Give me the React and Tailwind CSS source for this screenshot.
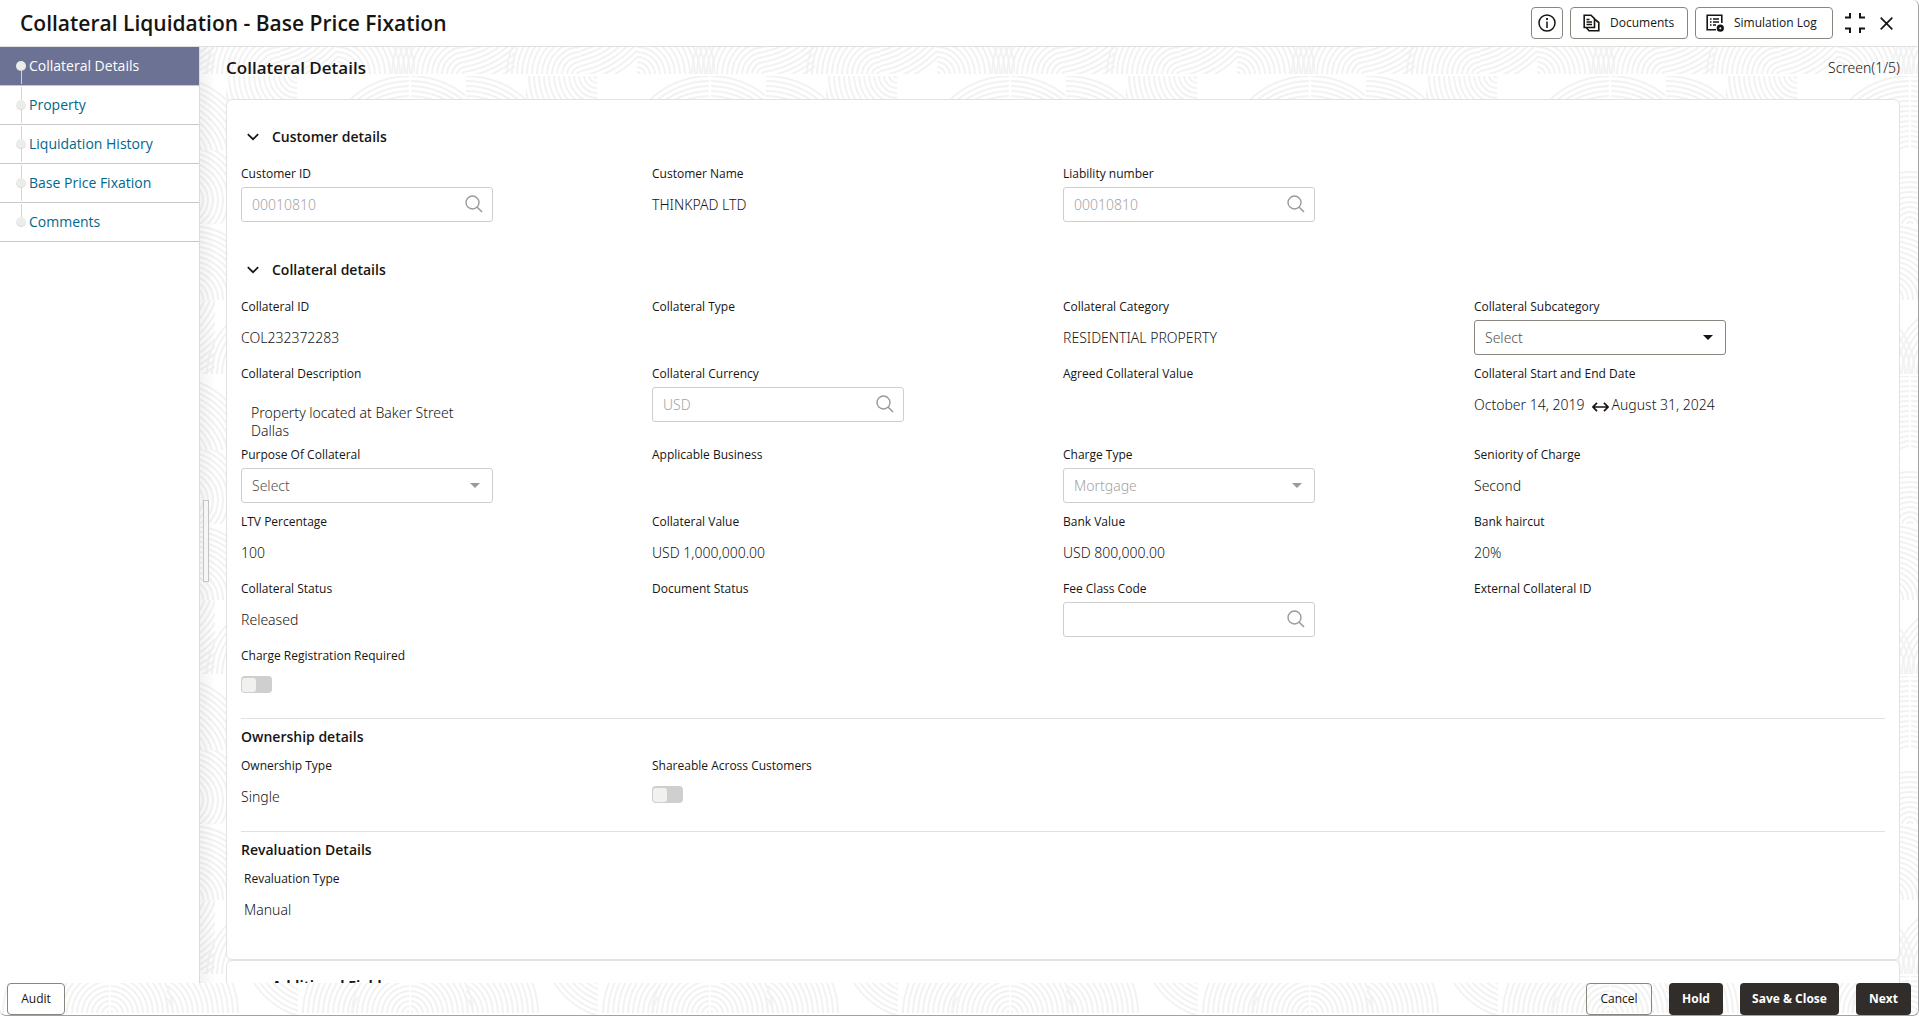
import React, { useId } from "react";

const RADII = Array.from({ length: 30 }, (_, i) => 3 + i * 5);

function Rings({ x, y, w, h, cx, cy, max }) {
  return (
    <svg x={x} y={y} width={w} height={h} viewBox={`${x} ${y} ${w} ${h}`}>
      {RADII.filter((r) => r <= max).map((r) => (
        <circle key={r} cx={cx} cy={cy} r={r} fill="none" stroke="#f3f2f2" strokeWidth="2" />
      ))}
    </svg>
  );
}

function Texture({ left, top }) {
  const id = useId();
  return (
    <svg aria-hidden="true" className="pointer-events-none absolute inset-0 h-full w-full">
      <defs>
        <pattern id={id} width="300" height="300" patternUnits="userSpaceOnUse" patternTransform={`translate(${left} ${top})`}>
          <Rings x={37} y={0} w={78} h={74} cx={37} cy={75} max={78} />
          <Rings x={90} y={0} w={75} h={74} cx={165} cy={75} max={75} />
          <Rings x={165} y={0} w={50} h={74} cx={150} cy={-20} max={110} />
          <Rings x={205} y={0} w={75} h={74} cx={280} cy={75} max={75} />
          <Rings x={280} y={0} w={20} h={74} cx={262} cy={-20} max={110} />
          <Rings x={0} y={0} w={37} h={74} cx={-38} cy={-20} max={110} />
          <Rings x={0} y={76} w={109} h={74} cx={110} cy={164} max={90} />
          <Rings x={111} y={76} w={54} h={74} cx={110} cy={164} max={90} />
          <Rings x={166} y={76} w={62} h={74} cx={166} cy={164} max={90} />
          <Rings x={226} y={76} w={71} h={74} cx={297} cy={75} max={73} />
          <Rings x={200} y={150} w={100} h={74} cx={185} cy={200} max={62} />
          <Rings x={60} y={150} w={100} h={74} cx={110} cy={225} max={55} />
          <Rings x={0} y={150} w={60} h={74} cx={0} cy={150} max={74} />
          <Rings x={190} y={226} w={110} h={74} cx={190} cy={299} max={73} />
          <Rings x={0} y={226} w={90} h={74} cx={110} cy={225} max={90} />
          <Rings x={90} y={226} w={90} h={74} cx={90} cy={299} max={73} />
        </pattern>
      </defs>
      <rect width="100%" height="100%" fill={`url(#${id})`} />
    </svg>
  );
}

function FooterTexture() {
  const id = useId();
  return (
    <svg aria-hidden="true" className="pointer-events-none absolute inset-0 h-full w-full">
      <defs>
        <pattern id={id} width="300" height="32" patternUnits="userSpaceOnUse">
          <Rings x={2} y={0} w={107} h={30} cx={110} cy={31} max={58} />
          <Rings x={111} y={0} w={64} h={30} cx={110} cy={31} max={63} />
          <Rings x={2} y={0} w={56} h={30} cx={86} cy={31} max={84} />
          <Rings x={166} y={0} w={74} h={30} cx={150} cy={31} max={90} />
          <Rings x={240} y={0} w={58} h={32} cx={320} cy={-42} max={78} />
        </pattern>
      </defs>
      <rect width="100%" height="100%" fill={`url(#${id})`} />
    </svg>
  );
}

const STEPS = ["Collateral Details", "Property", "Liquidation History", "Base Price Fixation", "Comments"];

function Steps() {
  return (
    <nav aria-label="Steps" className="w-[200px] shrink-0 border-r border-[#d5dde0] bg-white">
      <ul>
        {STEPS.map((s, i) => (
          <li key={s} className="border-b border-[#c8c7c6]">
            <a
              href="#"
              aria-current={i === 0 ? "step" : undefined}
              className={
                "flex h-[38px] items-center pl-4 text-sm " +
                (i === 0 ? "bg-[#6b7294] text-white" : "text-[#00688c]")
              }
            >
              <span className="mr-[3px] flex h-full w-[10px] flex-col items-center py-px">
                <span className={"w-px flex-1 " + (i === 0 ? "" : "bg-[#d4d3d2]")} />
                <span className="size-[10px] rounded-full border-b border-[#d8d7d6] bg-[#ececeb]" />
                <span className={"w-px flex-1 " + (i === STEPS.length - 1 ? "" : "bg-[#d4d3d2]")} />
              </span>
              {s}
            </a>
          </li>
        ))}
      </ul>
    </nav>
  );
}

const LABEL = "block h-4 text-xs leading-4 whitespace-nowrap text-[#161513]";
const VALUE = "font-['Noto_Sans',sans-serif] text-sm font-light";
const BOX = VALUE + " h-[35px] w-full rounded-[3px] border bg-white pl-[10px]";

function Cell({ label, children }) {
  return (
    <div className="pb-[11px]">
      <div className={LABEL}>{label}</div>
      <div className={VALUE + " mt-[5px] flex h-[35px] items-center whitespace-nowrap text-[#161513]"}>{children}</div>
    </div>
  );
}

function SearchCell({ label, value }) {
  const id = useId();
  return (
    <div className="pb-[11px]">
      <label htmlFor={id} className={LABEL}>{label}</label>
      <div className="relative mt-[5px] w-[252px]">
        <input id={id} disabled defaultValue={value} className={BOX + " border-[#cfcecd] pr-10 text-[#a5a4a3]"} />
        <svg aria-hidden="true" viewBox="0 0 18 18" className="absolute top-2 right-[10px] size-[18px]" fill="none" stroke="#9c9a98" strokeWidth="1.4">
          <circle cx="7.5" cy="7.5" r="6.5" />
          <path d="M12 12l5 5" strokeWidth="1.6" />
        </svg>
      </div>
    </div>
  );
}

function SelectCell({ label, value, disabled, muted }) {
  const id = useId();
  return (
    <div className="pb-[11px]">
      <label htmlFor={id} className={LABEL}>{label}</label>
      <div className="relative mt-[5px] w-[252px]">
        <select
          id={id}
          disabled={disabled}
          className={
            BOX + " appearance-none opacity-100 " +
            (disabled ? "border-[#cfcecd] " : "border-[#8b8580] ") +
            (muted ? "text-[#a5a4a3]" : "text-[#56524f]")
          }
        >
          <option>{value}</option>
        </select>
        <svg aria-hidden="true" viewBox="0 0 10 5" className="pointer-events-none absolute top-[15px] right-[13px] h-[5px] w-[10px]" fill={disabled ? "#9c9a98" : "#161513"}>
          <path d="M0 0h10L5 5z" />
        </svg>
      </div>
    </div>
  );
}

function ToggleCell({ label }) {
  const id = useId();
  return (
    <div className="pb-[11px]">
      <label htmlFor={id} className={LABEL}>{label}</label>
      <div className="mt-[5px] flex h-[35px] items-start pt-[7px]">
        <input
          id={id}
          type="checkbox"
          role="switch"
          disabled
          className="flex h-[17px] w-[31px] appearance-none items-center rounded-[4px] bg-[#cfcfcf] pl-px before:h-[14px] before:w-[14px] before:rounded-[3px] before:bg-[#f1f1ef]"
        />
      </div>
    </div>
  );
}

function DescriptionCell({ label, value }) {
  const id = useId();
  return (
    <div className="pb-[7px]">
      <label htmlFor={id} className={LABEL}>{label}</label>
      <textarea
        id={id}
        readOnly
        defaultValue={value}
        className={VALUE + " mt-[5px] block h-[53px] w-[252px] resize-none overflow-hidden px-[10px] pt-[17px] leading-[18px] text-[#161513] outline-none"}
      />
    </div>
  );
}

function SectionTitle({ children }) {
  return (
    <h3 className="text-sm leading-5 font-semibold text-[#161513]">
      <button type="button" aria-expanded="true" className="flex items-center gap-[13px] pl-[6px] font-semibold">
        <svg aria-hidden="true" viewBox="0 0 12 8" className="h-2 w-3" fill="none" stroke="#161513" strokeWidth="1.7">
          <path d="M.8 1.2L6 6.2l5.200-5" />
        </svg>
        {children}
      </button>
    </h3>
  );
}

const GRID = "grid grid-cols-4";
const HEAD_BTN = "flex h-8 items-center rounded-[4px] border border-[#8b8580] bg-white text-xs font-medium";
const DARK_BTN = "h-8 rounded-[4px] bg-[#312d2a] text-xs font-bold text-white";

export default function App() {
  return (
    <div className="flex h-screen flex-col overflow-hidden rounded-md border-r border-b border-[#a2a2a2] bg-white font-['Open_Sans',sans-serif] text-[#161513]">
      <header className="flex h-[47px] shrink-0 items-center border-b border-[#e0e0e0] pr-[25px] pl-5">
        <h1 className="flex-1 text-[21px] leading-7 font-semibold">Collateral Liquidation - Base Price Fixation</h1>
        <button type="button" aria-label="Information" className={HEAD_BTN + " mr-[7px] w-8 justify-center"}>
          <svg viewBox="0 0 18 18" className="size-[18px] shrink-0" fill="none" stroke="#161513" strokeWidth="1.5">
            <circle cx="9" cy="9" r="8" />
            <path d="M9 7.500v6.500" />
            <path d="M9 4v2" strokeWidth="1.8" />
          </svg>
        </button>
        <button type="button" className={HEAD_BTN + " mr-[7px] w-[118px] gap-[10px] pl-3"}>
          <svg aria-hidden="true" viewBox="0 0 17 18" className="h-[18px] w-[17px] shrink-0" fill="none" stroke="#161513" strokeWidth="1.600">
            <path d="M1.200 1.200h6.800l3.500 3.500v8.800H1.200z" />
            <path d="M3.500 5.500h3M3.500 8h5.500M3.500 10.500h5.500" strokeWidth="1.300" />
            <path d="M12 5.500l3.800 3v8.300H6l-2.500-3" />
          </svg>
          Documents
        </button>
        <button type="button" className={HEAD_BTN + " mr-3 w-[138px] gap-[10px] pl-[10px] whitespace-nowrap"}>
          <svg aria-hidden="true" viewBox="0 0 18 18" className="size-[18px] shrink-0" fill="none" stroke="#161513" strokeWidth="1.600">
            <path d="M10 15.800H1.200V1.200h14.600V9" />
            <path d="M4 5h1.500M7 5h6M4 8h1.500M7 8h6M4 11h1.500M7 11h3" strokeWidth="1.400" />
            <circle cx="14.300" cy="14.200" r="2.300" strokeWidth="2.600" />
          </svg>
          Simulation Log
        </button>
        <button type="button" aria-label="Exit full screen" className="mr-[15px]">
          <svg viewBox="0 0 20 20" className="size-5" fill="none" stroke="#161513" strokeWidth="2">
            <path d="M5 0v4.500H0M15 0v4.500h5M0 15.500h5V20M20 15.500h-5V20" />
          </svg>
        </button>
        <button type="button" aria-label="Close">
          <svg viewBox="0 0 13 13" className="size-[13px]" fill="none" stroke="#161513" strokeWidth="1.700">
            <path d="M.7.700l11.600 11.600M12.300.700L.700 12.300" />
          </svg>
        </button>
      </header>

      <div className="flex min-h-0 flex-1">
        <Steps />
        <main className="relative flex min-w-0 flex-1 overflow-hidden">
          <Texture left={-200} top={-47} />
          <div className="relative flex w-[26px] shrink-0 items-center bg-linear-to-r from-black/5 to-transparent to-60% pt-[52px] pl-[3px]">
            <div role="separator" aria-orientation="vertical" className="h-[82px] w-[6px] border border-[#c4c4c4] bg-[#f6f6f6]" />
          </div>
          <div className="relative flex min-w-0 flex-1 flex-col pr-[18px]">
            <div className="flex h-[52px] shrink-0 items-start justify-between pt-[7px]">
              <h2 className="text-[17px] leading-7 font-semibold">Collateral Details</h2>
              <span className={VALUE + " leading-7"}>Screen(1/5)</span>
            </div>

            <section className="shrink-0 rounded-md border border-[#e2e2e2] bg-white px-[14px] pt-[27px] pb-[21px]">
              <SectionTitle>Customer details</SectionTitle>
              <div className={GRID + " mt-[19px]"}>
                <SearchCell label="Customer ID" value="00010810" />
                <Cell label="Customer Name">THINKPAD LTD</Cell>
                <SearchCell label="Liability number" value="00010810" />
              </div>

              <div className="mt-[27px]">
                <SectionTitle>Collateral details</SectionTitle>
              </div>
              <div className={GRID + " mt-[19px]"}>
                <Cell label="Collateral ID">COL232372283</Cell>
                <Cell label="Collateral Type" />
                <Cell label="Collateral Category">RESIDENTIAL PROPERTY</Cell>
                <SelectCell label="Collateral Subcategory" value="Select" />

                <DescriptionCell label="Collateral Description" value="Property located at Baker Street Dallas" />
                <SearchCell label="Collateral Currency" value="USD" />
                <Cell label="Agreed Collateral Value" />
                <Cell label="Collateral Start and End Date">
                  October 14, 2019
                  <svg role="img" aria-label="to" viewBox="0 0 17 10" className="mt-1 ml-2 h-[10px] w-[17px]" fill="none" stroke="#161513" strokeWidth="1.700">
                    <path d="M1 5h15M5 .8L1 5l4 4.200M12 .8L16 5l-4 4.200" />
                  </svg>
                  <span className="ml-0.5">August 31, 2024</span>
                </Cell>

                <SelectCell label="Purpose Of Collateral" value="Select" disabled />
                <Cell label="Applicable Business" />
                <SelectCell label="Charge Type" value="Mortgage" disabled muted />
                <Cell label="Seniority of Charge">Second</Cell>

                <Cell label="LTV Percentage">100</Cell>
                <Cell label="Collateral Value">USD 1,000,000.00</Cell>
                <Cell label="Bank Value">USD 800,000.00</Cell>
                <Cell label="Bank haircut">20%</Cell>

                <Cell label="Collateral Status">Released</Cell>
                <Cell label="Document Status" />
                <SearchCell label="Fee Class Code" value="" />
                <Cell label="External Collateral ID" />

                <ToggleCell label="Charge Registration Required" />
              </div>

              <hr className="mt-[3px] border-[#e0e0e0]" />
              <h3 className="mt-2 text-sm leading-5 font-semibold">Ownership details</h3>
              <div className={GRID + " mt-[11px]"}>
                <Cell label="Ownership Type">Single</Cell>
                <ToggleCell label="Shareable Across Customers" />
              </div>

              <hr className="mt-[6px] border-[#e0e0e0]" />
              <h3 className="mt-2 text-sm leading-5 font-semibold">Revaluation Details</h3>
              <div className={GRID + " mt-[11px] pl-[3px]"}>
                <Cell label="Revaluation Type">Manual</Cell>
              </div>
            </section>

            <section className="h-40 shrink-0 rounded-md border border-[#e2e2e2] bg-white px-[14px] pt-[15px]">
              <h3 className="pl-[31px] text-sm leading-5 font-bold">Additional Fields</h3>
            </section>
          </div>
        </main>
      </div>

      <footer className="relative h-8 shrink-0">
        <FooterTexture />
        <div className="relative flex items-center gap-[17px] px-[7px]">
          <button type="button" className={HEAD_BTN + " mr-auto w-[58px] justify-center"}>Audit</button>
          <button type="button" className="h-8 w-[66px] rounded-[4px] border border-[#8b8580] text-xs font-medium">Cancel</button>
          <button type="button" className={DARK_BTN + " w-[54px]"}>Hold</button>
          <button type="button" className={DARK_BTN + " w-[99px]"}>Save &amp; Close</button>
          <button type="button" className={DARK_BTN + " w-[55px]"}>Next</button>
        </div>
      </footer>
    </div>
  );
}
